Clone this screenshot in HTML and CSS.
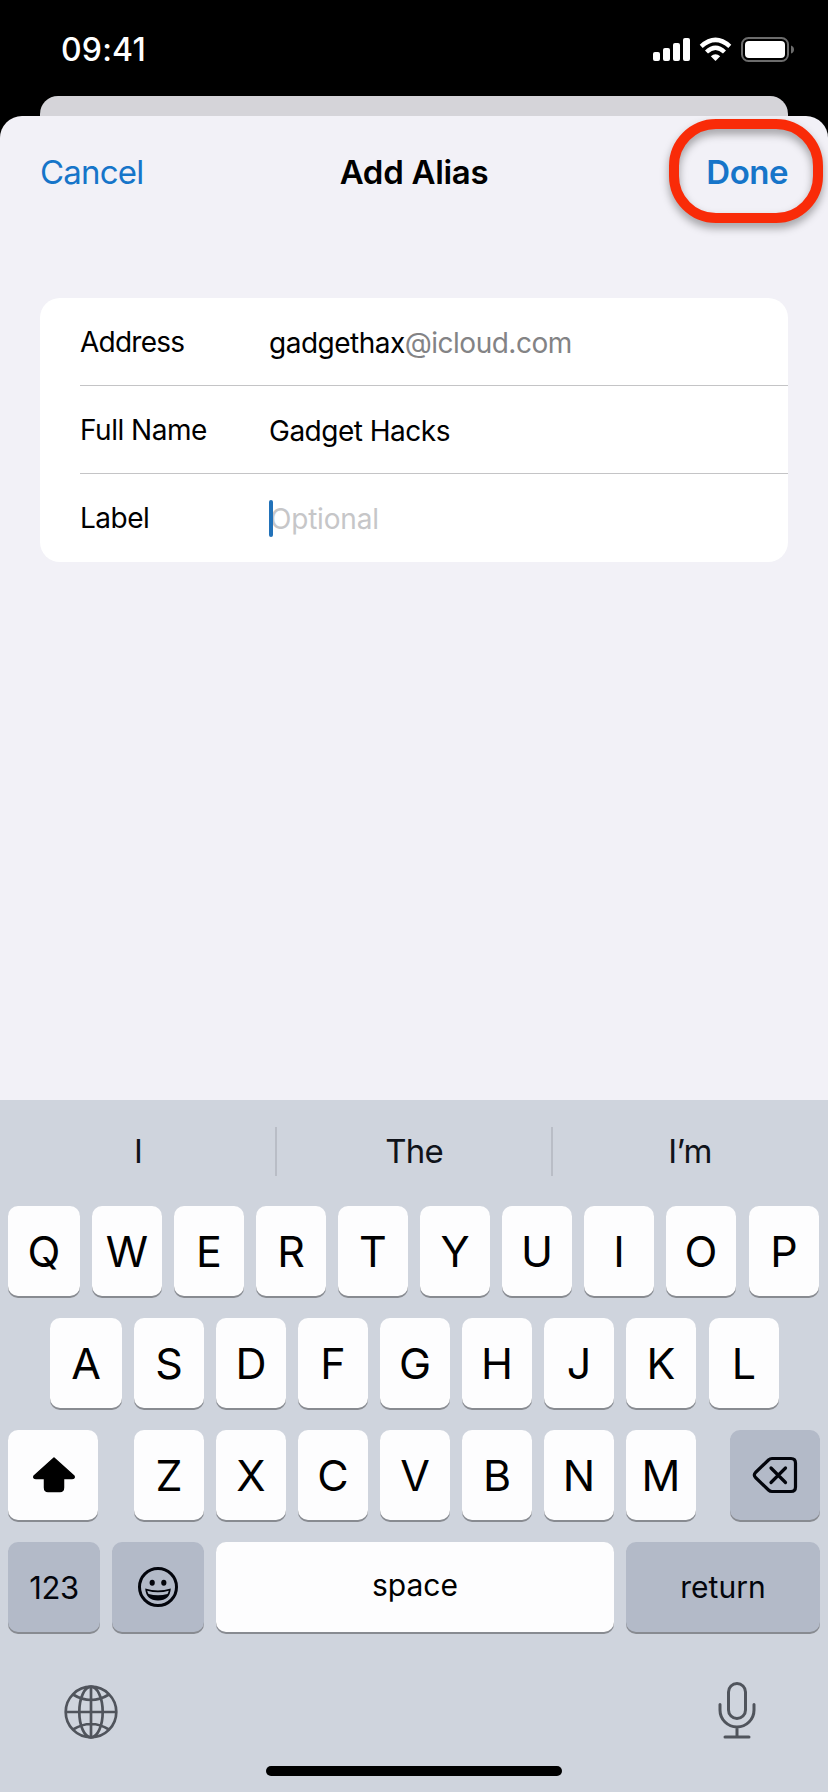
FILE: index.html
```html
<!DOCTYPE html>
<html lang="en">
<head>
<meta charset="utf-8">
<title>Add Alias</title>
<link rel="stylesheet" href="styles.css">
</head>
<body>
<div class="phone">
  <div class="status">
    <span class="time">09:41</span>
    <svg class="status-icons" width="144" height="28" viewBox="0 0 144 28">
      <g fill="#fff">
        <rect x="3" y="16" width="7" height="9" rx="2"/>
        <rect x="13" y="12" width="7" height="13" rx="2"/>
        <rect x="23" y="7" width="7" height="18" rx="2"/>
        <rect x="33" y="2" width="7" height="23" rx="2"/>
        <path d="M65.5 25 L60.8 20.3 Q65.5 16.2 70.2 20.3 Z"/>
      </g>
      <g fill="none" stroke="#fff" stroke-width="4.4">
        <path d="M51.2 10.3 Q65.5 -2.600 79.800 10.300"/>
        <path d="M56.500 16 Q65.500 7.600 74.500 16"/>
      </g>
      <rect x="92" y="2" width="46" height="23" rx="6.500" fill="none" stroke="#6c6c6c" stroke-width="2"/>
      <rect x="95" y="5" width="40" height="17" rx="4" fill="#fff"/>
      <path d="M141 9.500 Q144 10.500 144 13.500 Q144 16.500 141 17.500 Z" fill="#6c6c6c"/>
    </svg>
  </div>
  <div class="back-sheet"></div>
  <main class="sheet">
    <header class="nav">
      <span class="cancel">Cancel</span>
      <h1 class="title">Add Alias</h1>
      <span class="done">Done</span>
    </header>
    <section class="card">
      <div class="row"><span class="label address">Address</span><span class="value"><span class="user">gadgethax</span><span class="domain">@icloud.com</span></span></div>
      <div class="row"><span class="label">Full Name</span><span class="value">Gadget Hacks</span></div>
      <div class="row"><span class="label">Label</span><span class="value placeholder">Optional</span></div>
    </section>
  </main>
  <section class="keyboard">
    <div class="suggestions"><span>I</span><span class="mid">The</span><span>I’m</span></div>
    <div class="keys">
      <div class="krow"><span class="key first">Q</span><span class="key">W</span><span class="key">E</span><span class="key">R</span><span class="key">T</span><span class="key">Y</span><span class="key">U</span><span class="key">I</span><span class="key">O</span><span class="key last">P</span></div>
      <div class="krow inset"><span class="key first">A</span><span class="key">S</span><span class="key">D</span><span class="key">F</span><span class="key">G</span><span class="key">H</span><span class="key">J</span><span class="key">K</span><span class="key last">L</span></div>
      <div class="krow spread">
        <span class="key shift"><svg width="44" height="38" viewBox="0 0 44 38"><path d="M22 2 L42 20 Q43 22.500 40 22.500 H31.500 V31.500 Q31.500 35.500 28 35.500 H16 Q12.500 35.500 12.500 31.500 V22.500 H4 Q1 22.500 2 20 Z" fill="#000" stroke="#000" stroke-width="1.500" stroke-linejoin="round"/></svg></span>
        <div class="letters"><span class="key">Z</span><span class="key">X</span><span class="key">C</span><span class="key">V</span><span class="key">B</span><span class="key">N</span><span class="key">M</span></div>
        <span class="key gray delete"><svg width="46" height="38" viewBox="0 0 46 38"><g fill="none" stroke="#03050c" stroke-width="3.200" stroke-linecap="round" stroke-linejoin="round"><path d="M20 2.500 H39 Q43.500 2.500 43.500 7 V31 Q43.500 35.500 39 35.500 H20 Q18 35.500 16.500 34 L3.500 21.500 Q1.200 19 3.500 16.500 L16.500 4 Q18 2.500 20 2.500 Z"/><path d="M19 12 L33.500 26.500 M33.500 12 L19 26.500"/></g></svg></span>
      </div>
      <div class="krow">
        <span class="key gray num">123</span>
        <span class="key gray emoji"><svg width="42" height="42" viewBox="0 0 42 42"><circle cx="21" cy="21" r="18.500" fill="none" stroke="#03050c" stroke-width="3"/><ellipse cx="15.200" cy="16.700" rx="2.600" ry="3" fill="#03050c"/><ellipse cx="26.800" cy="16.700" rx="2.600" ry="3" fill="#03050c"/><path d="M8.200 22.500 Q21 26.500 33.800 22.500 Q33 34.500 21 34.500 Q9 34.500 8.200 22.500 Z" fill="#03050c"/><path d="M10.200 24.800 Q21 27.800 31.800 24.800 Q31.300 26.800 30.500 28 Q21 30.500 11.500 28 Q10.700 26.800 10.200 24.800 Z" fill="#b3bac8"/></svg></span>
        <span class="key space">space</span>
        <span class="key gray return">return</span>
      </div>
    </div>
    <div class="tools">
      <svg class="globe" width="54" height="54" viewBox="0 0 54 54"><g fill="none" stroke="#50545c" stroke-width="2.700"><circle cx="27" cy="27" r="25.300"/><ellipse cx="27" cy="27" rx="11.700" ry="25.300"/><path d="M27 1.700 V52.300 M1.700 27 H52.300 M9 9.500 Q27 20.500 45 9.500 M9 44.500 Q27 33.500 45 44.500"/></g></svg>
      <svg width="38" height="58" viewBox="0 0 38 58"><g fill="none" stroke="#50545c" stroke-width="3" stroke-linecap="round"><rect x="10.500" y="2.500" width="17" height="35" rx="8.500"/><path d="M2 23.500 V29 A17 17 0 0 0 36 29 V23.500 M19 46 V56 M7 56 H31"/></g></svg>
    </div>
    <div class="home"></div>
  </section>
</div>
</body>
</html>
```
FILE: styles.css
```css
*, *::before, *::after { box-sizing: border-box; }
body { margin: 0; background: #000; font-family: Inter, "Liberation Sans", sans-serif; color: #000; }
.phone { width: 828px; height: 1792px; display: flex; flex-direction: column; background: #000; overflow: hidden; }
svg { display: block; }

.status { height: 96px; padding: 4px 34px 0 61px; display: flex; justify-content: space-between; align-items: center; color: #fff; }
.time { font-size: 32px; font-weight: 500; line-height: 40px; letter-spacing: .2px; }
.back-sheet { height: 20px; margin: 0 40px; background: #d5d4d9; border-radius: 18px 18px 0 0; }

.sheet { height: 984px; background: #f2f1f7; border-radius: 22px 22px 0 0; }
.nav { height: 112px; padding: 0 40px; display: grid; grid-template-columns: 1fr auto 1fr; align-items: center; font-size: 33px; line-height: 40px; }
.cancel { color: #1675c9; letter-spacing: -.8px; }
.title { margin: 0; font-size: 33px; font-weight: 600; letter-spacing: -.3px; }
.done { position: relative; justify-self: end; color: #1675c9; font-weight: 600; letter-spacing: -.5px; }
.done::after { content: ""; position: absolute; right: -35px; top: -33.500px; width: 154px; height: 104px; border: 10.500px solid #f92b08; border-radius: 47px; filter: drop-shadow(0 5px 4px rgba(0, 0, 0, .35)); }

.card { margin: 70px 40px 0; height: 264px; padding-left: 40px; background: #fff; border-radius: 20px; font-size: 28px; line-height: 36px; letter-spacing: -.5px; }
.row { height: 88px; display: grid; grid-template-columns: 189px 1fr; align-items: center; border-bottom: 1px solid #c4c4c6; }
.row:last-child { border-bottom: 0; }
.address { letter-spacing: -.75px; }
.value { padding-top: 2px; }
.domain { color: #838385; }
.placeholder { position: relative; padding-left: 1px; color: #c6c6c8; letter-spacing: -.2px; }
.placeholder::before { content: ""; position: absolute; left: 0; top: 1px; width: 4px; height: 37px; border-radius: 2px; background: #2272b9; }

.keyboard { height: 692px; background: #cfd4dd; }
.suggestions { height: 106px; padding-bottom: 4px; display: grid; grid-template-columns: 276px 276px 276px; align-items: center; text-align: center; font-size: 33px; line-height: 49px; letter-spacing: -.8px; color: #10131a; }
.mid { border: solid #b9bdc6; border-width: 0 2px; margin: 0 -1px; }
.keys { display: flex; flex-direction: column; gap: 22px; padding: 0 8px; }
.krow { height: 90px; display: flex; gap: 12px; }
.inset { padding-left: 42px; }
.key { width: 70px; height: 90px; border-radius: 10px; background: #fdfdfe; box-shadow: 0 2px 0 #888b91; display: flex; align-items: center; justify-content: center; font-size: 43px; }
.first { width: 72px; }
.last { margin-left: 1px; }
.spread { gap: 0; }
.letters { display: flex; gap: 12px; margin: 0 34px 0 36px; }
.shift, .delete { width: 90px; }
.shift { padding-left: 2px; }
.gray { background: #b3bac8; color: #03050c; }
.num { width: 92px; font-size: 31px; letter-spacing: -.4px; }
.emoji { width: 92px; }
.space { width: 398px; font-size: 30px; padding-bottom: 4px; }
.return { width: 194px; font-size: 30px; }
.tools { display: flex; justify-content: space-between; align-items: center; height: 60px; margin-top: 48px; padding: 0 72px 0 64px; }
.globe { margin-top: 4px; }
.home { width: 296px; height: 10px; margin: 26px auto 0; border-radius: 5px; background: #000; }
```
